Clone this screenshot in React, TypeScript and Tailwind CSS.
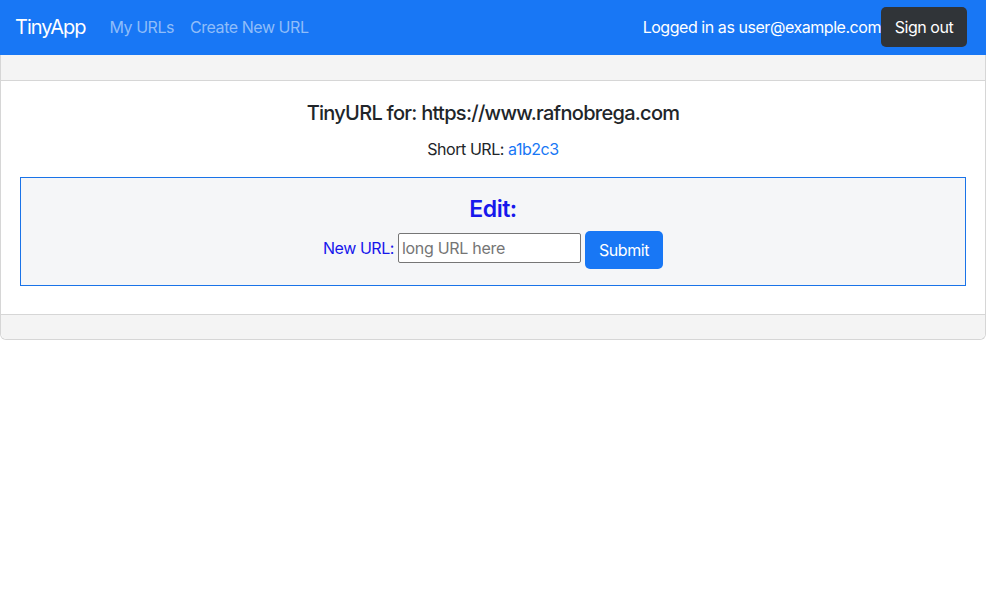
import React from "react";

export default function App() {
  return (
    <div className="min-h-[598px] bg-white text-[#212529]" style={{ fontFamily: "Inter, 'Noto Sans', sans-serif" }}>
      <nav className="h-[55px] bg-[#1877f5] flex items-center pl-[15px] pr-[19px] pb-[1px]">
        <span className="text-[20px] text-white tracking-[-1px]">TinyApp</span>
        <div className="flex items-center gap-[16px] ml-[24px] text-[16px] text-[#8fbdf9] tracking-[-0.45px]">
          <a>My URLs</a>
          <a>Create New URL</a>
        </div>
        <div className="ml-auto flex items-center">
          <span className="text-white text-[16px] tracking-[-0.45px]">Logged in as user@example.com</span>
          <button className="h-[40px] w-[86px] bg-[#303438] rounded-[5px] text-white text-[16px] tracking-[-0.45px]">Sign out</button>
        </div>
      </nav>
      <div className="border border-[#d6d6d6] border-t-0 rounded-b-[6px]">
        <div className="h-[26px] bg-[#f4f4f4] border-b border-[#d6d6d6]"></div>
        <div className="px-[19px] pt-[20px] pb-[28px] flex flex-col items-center">
          <h5 className="text-[20px] font-medium leading-[24px] tracking-[-0.72px]">TinyURL for: https://www.rafnobrega.com</h5>
          <p className="mt-[12px] text-[16px] leading-[24px] tracking-[-0.45px]">
            Short URL: <a className="text-[#1877f5]">a1b2c3</a>
          </p>
          <div className="mt-[16px] w-full border border-[#1a73e8] bg-[#f5f6f8] pt-[17px] pb-[16px] flex flex-col items-center">
            <h3 className="text-[23px] font-semibold leading-[28px] text-[#1717ec] tracking-[-0.5px]">Edit:</h3>
            <div className="mt-[8px] flex items-center">
              <label className="text-[#1717ec] text-[16px] tracking-[-0.45px] mr-[4px] mb-[4px]">New URL:</label>
              <input
                placeholder="long URL here"
                className="w-[183px] h-[30px] mb-[4px] border border-[#767676] rounded-[2px] bg-white px-[3px] text-[16px] tracking-[-0.3px] placeholder:text-[#757575] outline-none"
              />
              <button className="ml-[4px] h-[38px] w-[78px] bg-[#1877f5] rounded-[5px] text-white text-[16px] tracking-[-0.45px]">Submit</button>
            </div>
          </div>
        </div>
        <div className="h-[25px] bg-[#f4f4f4] border-t border-[#d6d6d6] rounded-b-[6px]"></div>
      </div>
    </div>
  );
}
